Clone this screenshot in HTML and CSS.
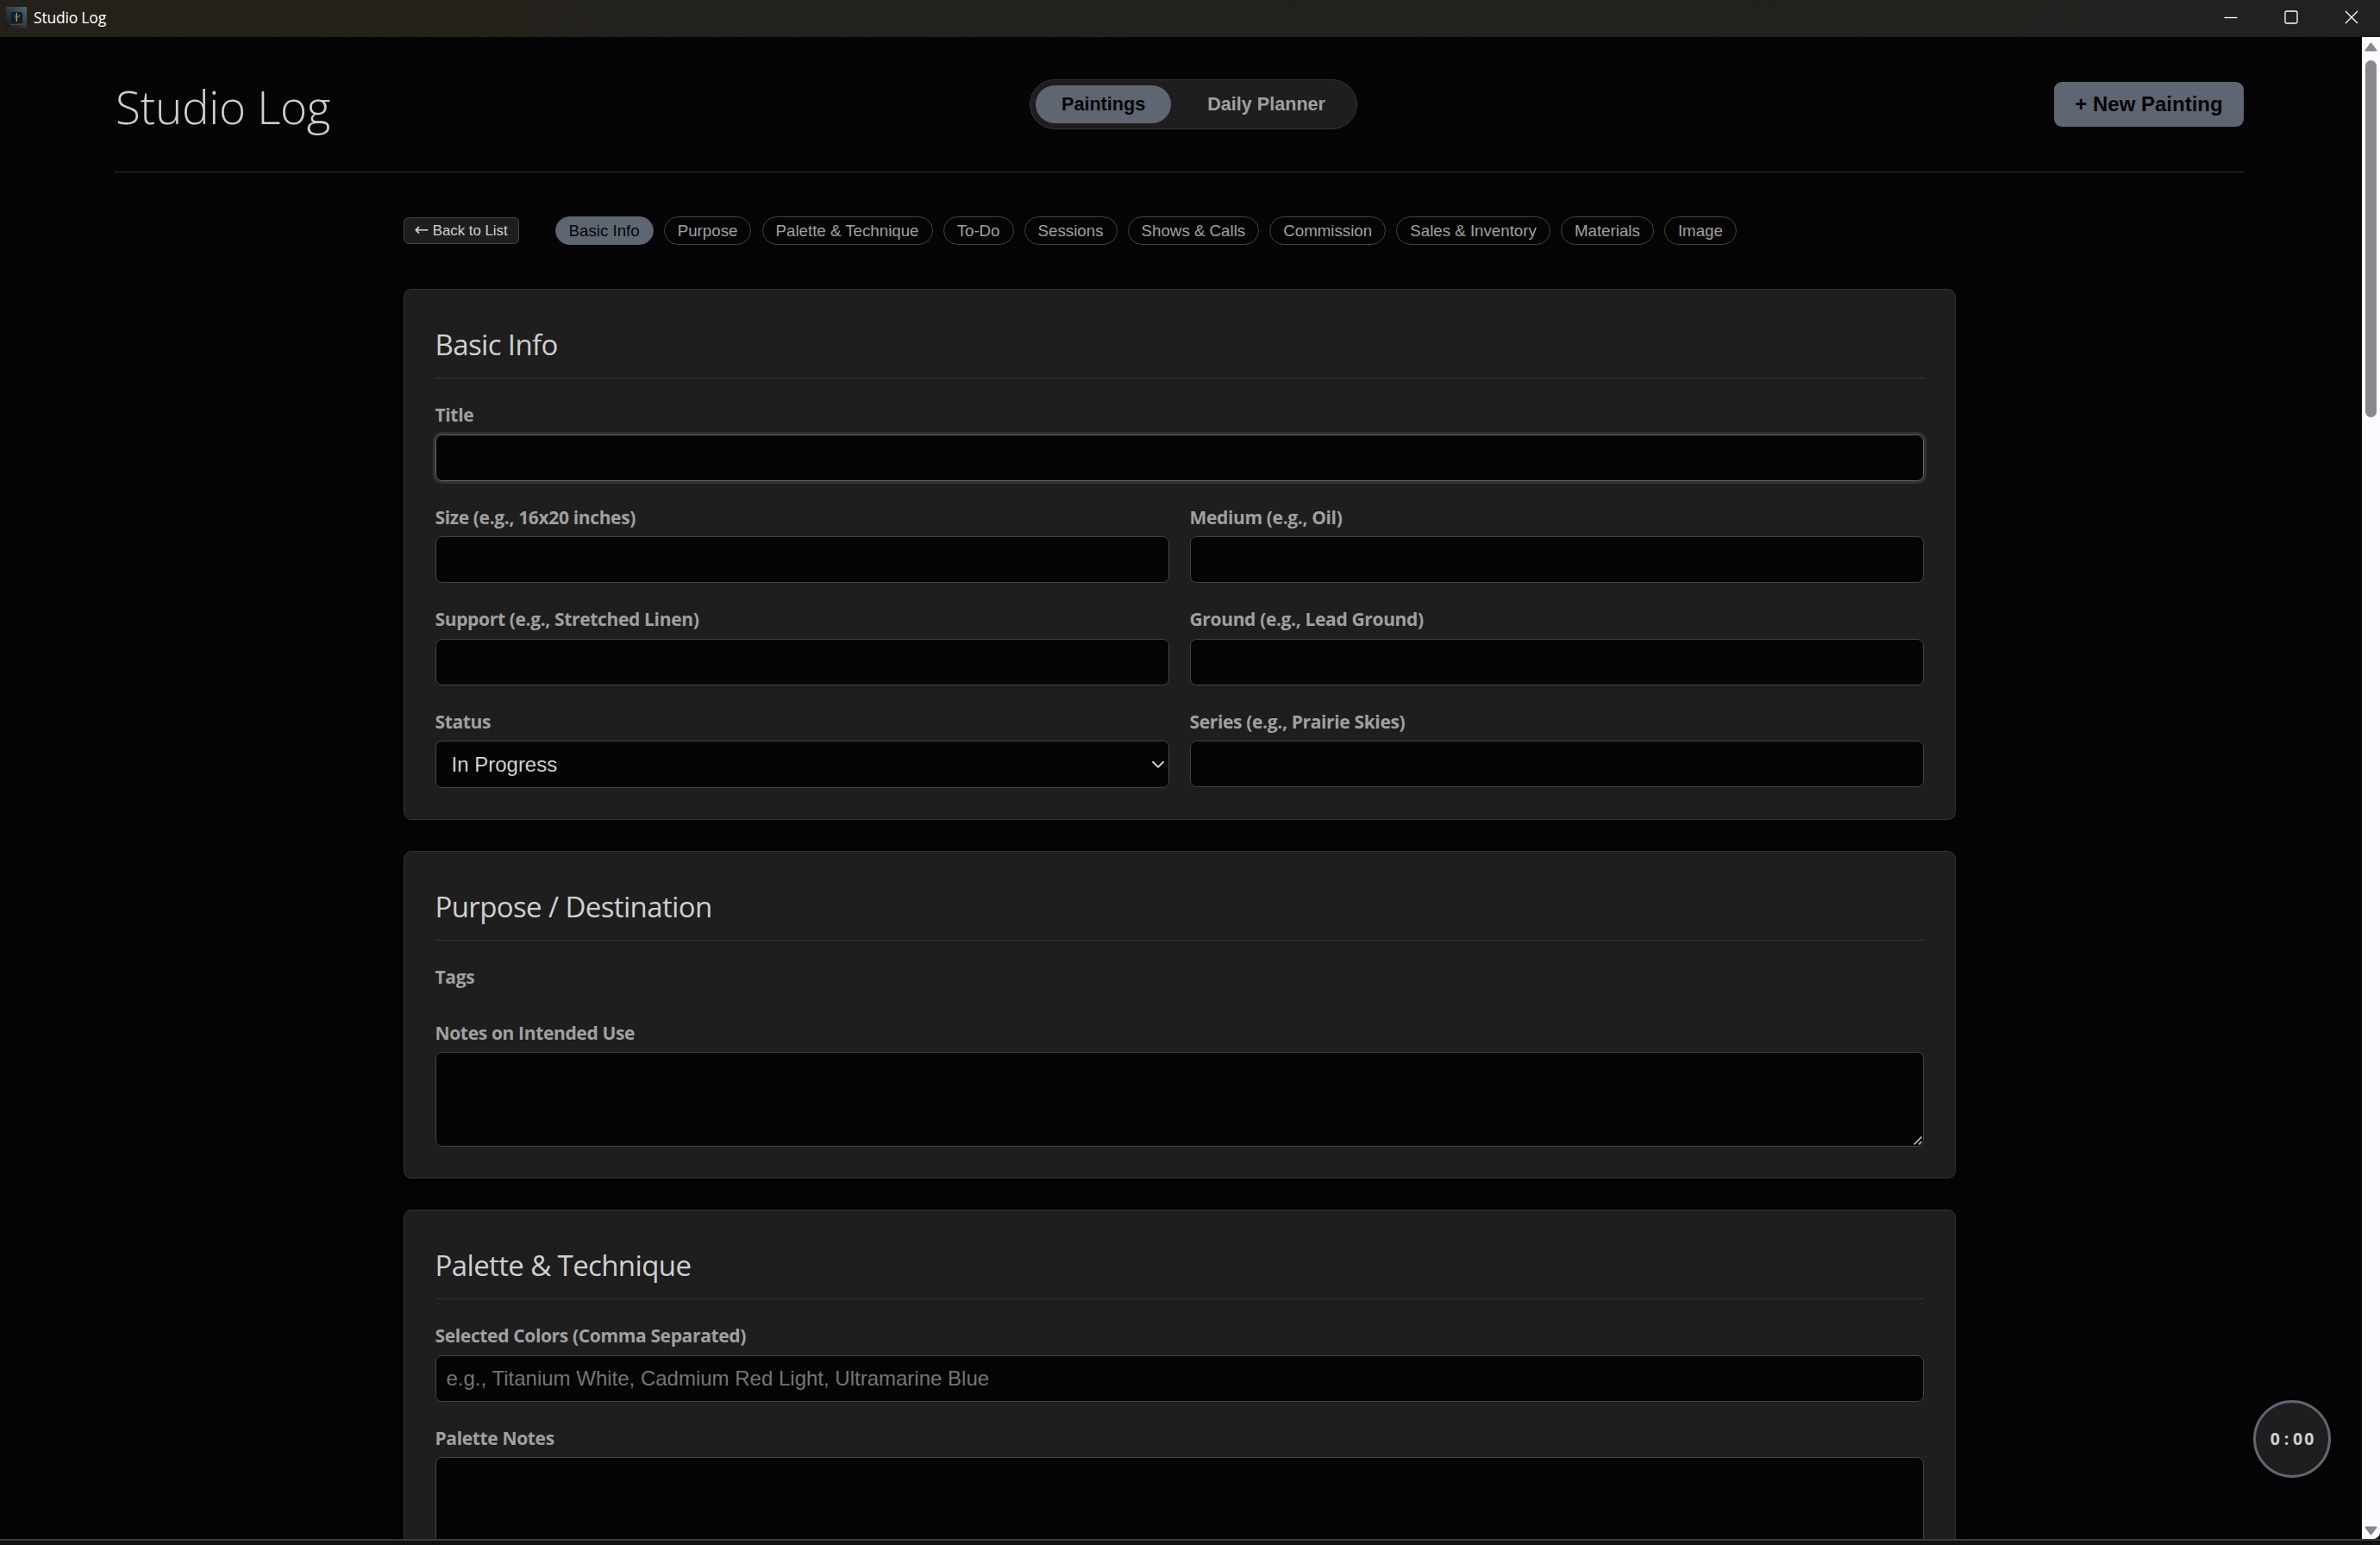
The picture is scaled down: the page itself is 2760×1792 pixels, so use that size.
FILE: index.html
```html
<!DOCTYPE html>
<html lang="en">
<head>
    <meta charset="UTF-8">
    <meta name="viewport" content="width=device-width, initial-scale=1.0">
    <title>Studio Log</title>
    <link rel="stylesheet" href="styles.css">
</head>
<body>
    <div class="titlebar">
        <svg class="app-icon" viewBox="0 0 24 24">
            <defs>
                <linearGradient id="iconBg" x1="1" y1="0" x2="0" y2="1">
                    <stop offset="0" stop-color="#4f6772"/>
                    <stop offset="0.5" stop-color="#2f3d47"/>
                    <stop offset="1" stop-color="#15171e"/>
                </linearGradient>
            </defs>
            <rect width="24" height="24" fill="url(#iconBg)"/>
            <rect x="6" y="6" width="13" height="13" rx="2.5" fill="#131a20"/>
            <path d="M8 8l3 2v4l-2-1zM17 8l-3 2v4l2-2z" fill="#27414d"/>
            <path d="M12.3 7v10" stroke="#b79a6a" stroke-width="1.4"/>
            <path d="M13 12l3-2" stroke="#7d6a4c" stroke-width="1"/>
            <path d="M5 20.5h15" stroke="#4a4640" stroke-width="1"/>
        </svg>
        <span class="app-name">Studio Log</span>
        <div class="window-controls">
            <svg viewBox="0 0 16 16"><path d="M0.5 8.5h15"/></svg>
            <svg viewBox="0 0 16 16"><rect x="1" y="1" width="14" height="14" rx="1.5"/></svg>
            <svg viewBox="0 0 16 16"><path d="M1 1l14 14M15 1L1 15"/></svg>
        </div>
    </div>

    <div class="window-body">
        <main class="page">
            <header>
                <h1>Studio Log</h1>
                <div class="view-toggle">
                    <button class="active">Paintings</button>
                    <button>Daily Planner</button>
                </div>
                <button class="btn-primary">+ New Painting</button>
            </header>

            <div class="form-container">
                <nav class="form-nav">
                    <button class="btn-back"><span class="back-arrow">←</span> Back to List</button>
                    <div class="section-links">
                        <a class="active">Basic Info</a>
                        <a>Purpose</a>
                        <a>Palette &amp; Technique</a>
                        <a>To-Do</a>
                        <a>Sessions</a>
                        <a>Shows &amp; Calls</a>
                        <a>Commission</a>
                        <a>Sales &amp; Inventory</a>
                        <a>Materials</a>
                        <a>Image</a>
                    </div>
                </nav>

                <section class="card">
                    <h2>Basic Info</h2>
                    <div class="form-grid">
                        <div class="form-group full">
                            <label for="title">Title</label>
                            <input type="text" id="title" class="focused">
                        </div>
                        <div class="form-group">
                            <label for="size">Size (e.g., 16x20 inches)</label>
                            <input type="text" id="size">
                        </div>
                        <div class="form-group">
                            <label for="medium">Medium (e.g., Oil)</label>
                            <input type="text" id="medium">
                        </div>
                        <div class="form-group">
                            <label for="support">Support (e.g., Stretched Linen)</label>
                            <input type="text" id="support">
                        </div>
                        <div class="form-group">
                            <label for="ground">Ground (e.g., Lead Ground)</label>
                            <input type="text" id="ground">
                        </div>
                        <div class="form-group">
                            <label for="status">Status</label>
                            <div class="select-wrap">
                                <select id="status">
                                    <option>In Progress</option>
                                </select>
                                <svg class="chevron" viewBox="0 0 16 9"><path d="M1.5 1.2L8 7.6l6.5-6.4"/></svg>
                            </div>
                        </div>
                        <div class="form-group">
                            <label for="series">Series (e.g., Prairie Skies)</label>
                            <input type="text" id="series">
                        </div>
                    </div>
                </section>

                <section class="card">
                    <h2>Purpose / Destination</h2>
                    <div class="form-grid">
                        <div class="form-group full">
                            <label>Tags</label>
                            <div class="tag-list"></div>
                        </div>
                        <div class="form-group full">
                            <label for="purposeNotes">Notes on Intended Use</label>
                            <div class="textarea-wrap">
                                <textarea id="purposeNotes"></textarea>
                                <svg class="resizer" viewBox="0 0 10 10"><path d="M0.5 9.5l9-9M6 9.5l3.5-3.5"/></svg>
                            </div>
                        </div>
                    </div>
                </section>

                <section class="card">
                    <h2>Palette &amp; Technique</h2>
                    <div class="form-grid">
                        <div class="form-group full">
                            <label for="colors">Selected Colors (Comma Separated)</label>
                            <input type="text" id="colors" placeholder="e.g., Titanium White, Cadmium Red Light, Ultramarine Blue">
                        </div>
                        <div class="form-group full">
                            <label for="paletteNotes">Palette Notes</label>
                            <textarea id="paletteNotes"></textarea>
                        </div>
                    </div>
                </section>
            </div>
        </main>

        <div class="scrollbar">
            <svg class="arrow" viewBox="0 0 15 11"><path d="M7.5 1.5L13.5 9.5H1.5z"/></svg>
            <div class="thumb"></div>
            <svg class="arrow down" viewBox="0 0 15 11"><path d="M7.5 9.5L13.5 1.5H1.5z"/></svg>
        </div>

        <div class="timer"><span>0</span><span>:</span><span>0</span><span>0</span></div>
    </div>
    <div class="window-edge"></div>
</body>
</html>
```
FILE: styles.css
```css
:root {
    --bg: #050505;
    --card: #1e1e1e;
    --border: #333333;
    --input-border: #444444;
    --accent: #5e6672;
    --text: #d0d0d0;
    --muted: #a0a0a0;
}

* { box-sizing: border-box; }
body { margin: 0; height: 100vh; display: flex; flex-direction: column; overflow: hidden; background: var(--bg); color: var(--text); font-family: "Open Sans", "Noto Sans", sans-serif; }
button, input, select, textarea { font-family: "Liberation Sans", Arial, sans-serif; }

/* window frame */
.titlebar { flex: none; height: 43px; display: flex; align-items: center; padding: 0 25px 3px 7px; background: linear-gradient(90deg, #25211a, #1f221f); }
.app-icon { width: 24px; height: 24px; }
.app-name { margin-left: 8px; color: #fff; font-size: 17.5px; letter-spacing: -0.2px; line-height: 41px; }
.window-controls { display: flex; gap: 54px; margin-left: auto; }
.window-controls svg { width: 16px; height: 16px; fill: none; stroke: #fff; stroke-width: 1.3; }
.window-body { flex: 1; min-height: 0; display: flex; position: relative; }
.window-edge { flex: none; height: 7px; border-top: 2px solid #3a3a3a; background: #111; }

.page { flex: 1; overflow: hidden; padding: 36px 137px 0 133px; }

header { display: flex; justify-content: space-between; align-items: center; height: 121px; padding-bottom: 36px; border-bottom: 1px solid var(--border); }
h1 { margin: 0; width: 253px; height: 84px; font-size: 53px; font-weight: 300; line-height: 90px; letter-spacing: -0.3px; padding-left: 1px; white-space: nowrap; }
.view-toggle { display: flex; gap: 12px; padding: 6px; border: 1px solid var(--border); border-radius: 30px; background: var(--card); }
.view-toggle button { height: 44px; padding: 0 30px; border: none; border-radius: 22px; background: none; color: var(--muted); font-size: 21.6px; font-weight: bold; }
.view-toggle button.active { background: var(--accent); color: var(--bg); }
.btn-primary { height: 52px; padding: 0 24.3px; border: none; border-radius: 9px; background: var(--accent); color: var(--bg); font-size: 24px; font-weight: bold; }

.form-container { width: 1800px; margin: 0 auto; }
.form-nav { display: flex; align-items: center; gap: 42px; margin: 51px 0; }
.btn-back { width: 134px; height: 31px; padding: 0; border: 1px solid var(--input-border); border-radius: 6px; background: var(--card); color: var(--text); font-size: 16.8px; line-height: 28px; white-space: nowrap; }
.back-arrow { font-family: "DejaVu Sans", sans-serif; font-size: 20px; line-height: 20px; }
.section-links { display: flex; gap: 12.1px; }
.section-links a { height: 33px; padding: 0 15px; border: 1px solid var(--input-border); border-radius: 18px; color: var(--muted); font: 18.72px/31px "Liberation Sans", Arial, sans-serif; }
.section-links a.active { background: var(--accent); border-color: var(--accent); color: var(--bg); }

.card { margin-bottom: 36px; padding: 36px; background: var(--card); border: 1px solid var(--border); border-radius: 9px; box-shadow: 0 6px 9px rgba(0, 0, 0, 0.3); }
h2 { margin: 0 0 24px; height: 67px; border-bottom: 1px solid var(--border); font-size: 33px; font-weight: 400; line-height: 56px; letter-spacing: -0.62px; }
.form-grid { display: grid; grid-template-columns: 1fr 1fr; gap: 24px; }
.full { grid-column: 1 / -1; }
label { display: block; height: 34.5px; margin-bottom: 6px; color: var(--muted); font-size: 21px; font-weight: 700; line-height: 36.5px; letter-spacing: -0.35px; }
input, select, textarea { display: block; width: 100%; height: 54px; padding: 12px; border: 1px solid var(--input-border); border-radius: 7.5px; outline: none; background: var(--bg); color: var(--text); font-size: 24px; }
input::placeholder { color: #757575; }
input.focused { border-color: var(--accent); box-shadow: 0 0 0 3px rgba(95, 102, 115, 0.3); }
select { appearance: none; height: 55px; padding: 0 18px; }
textarea { height: 110px; resize: none; }
#paletteNotes { height: 140px; }

.select-wrap, .textarea-wrap { position: relative; }
.chevron { position: absolute; right: 5px; top: 23px; width: 16px; height: 9px; fill: none; stroke: var(--text); stroke-width: 2; }
.resizer { position: absolute; right: 2px; bottom: 2px; width: 10px; height: 10px; fill: none; stroke: #bbb; stroke-width: 1.6; }

.scrollbar { flex: none; width: 21px; display: flex; flex-direction: column; align-items: center; padding: 6px 0 4px; background: #fcfaff; border-bottom-right-radius: 8px; }
.arrow { width: 15px; height: 11px; fill: #8a888b; stroke: #8a888b; stroke-width: 2; stroke-linejoin: round; }
.arrow.down { margin-top: auto; }
.thumb { width: 13px; height: 414px; margin-top: 10px; border-radius: 7px; background: #8a888b; }

/* floating session timer */
.timer { position: absolute; right: 57px; bottom: 71px; width: 90px; height: 90px; display: flex; align-items: center; justify-content: center; padding-bottom: 2px; border: 3px solid var(--accent); border-radius: 50%; background: var(--card); box-shadow: 0 6px 9px rgba(0, 0, 0, 0.3); font-size: 19.5px; font-weight: 700; }
.timer span { width: 13.2px; text-align: center; }
```
